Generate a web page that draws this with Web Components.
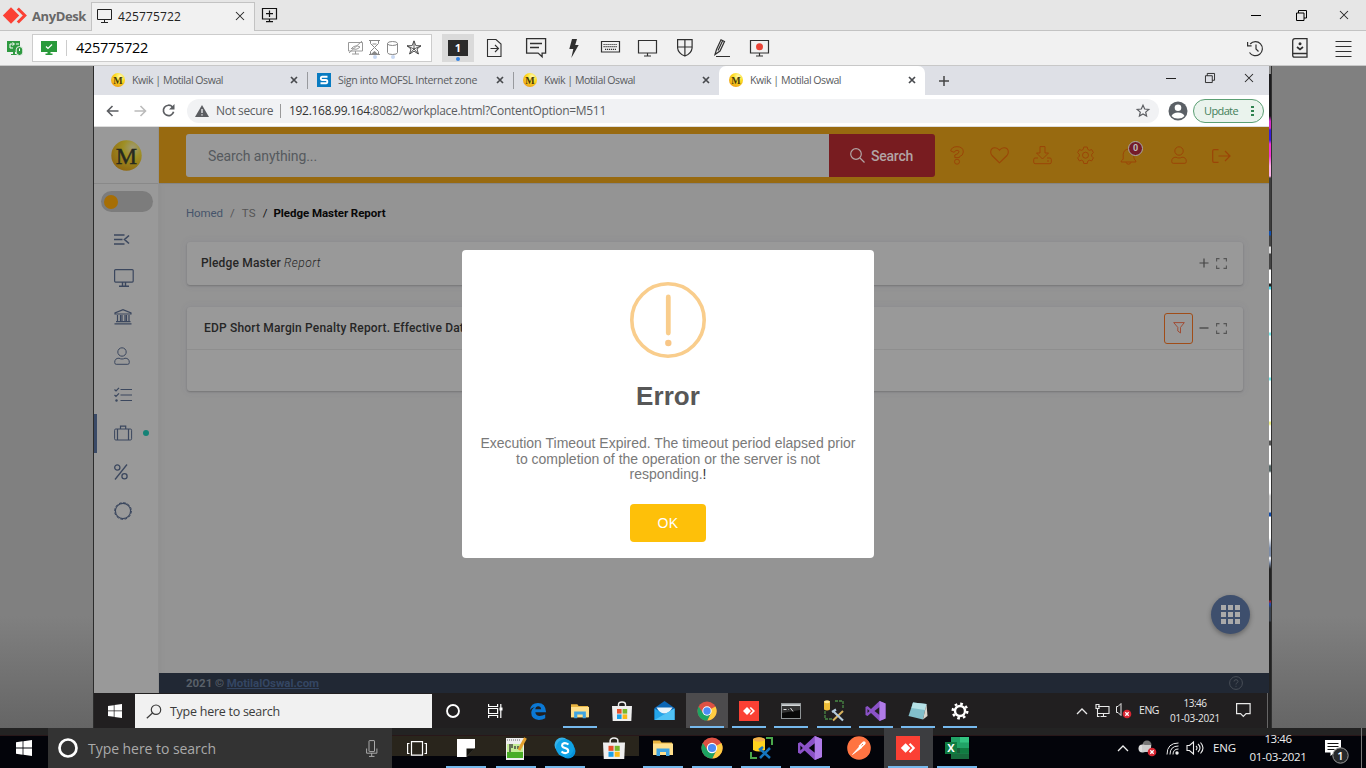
<!DOCTYPE html>
<html lang="en"><head><meta charset="utf-8"><title>AnyDesk</title>
<style>html,body{margin:0;width:1366px;height:768px;overflow:hidden;font-family:"Open Sans","Noto Sans",sans-serif}</style></head>
<body><desk-screen></desk-screen>
<script>
const S='fill="none" stroke="currentColor"';
const chrome='<circle cx="10" cy="10" r="9.6" fill="#dd5144"/><path d="M10 10 18.5 5.4A9.6 9.6 0 0 1 10.2 19.6L14 12z" fill="#ffcd42"/><path d="M1.6 5.4A9.6 9.6 0 0 0 10.2 19.6L14 12 10 14 6 12z" fill="#1da462"/><circle cx="10" cy="10" r="4.7" fill="#fff"/><circle cx="10" cy="10" r="3.7" fill="#4c8bf5"/>';
const folder='<path d="M1 2.5h7l1.5 2H20V17H1z" fill="#e9b440"/><path d="M1 5.5h20V17H1z" fill="#ffe08c"/><path d="M4.5 18v-7.5h13V18h-3.5v-4H8v4z" fill="#3fa4e2"/>';
const vs='<path d="M14 0 20 2.500v15L14 20 5.500 12 2 15 0 14V6l2-1 3.500 3zM14 6 9 10l5 4zM2 8v4l2-2z" fill="#8b52c7" fill-rule="evenodd"/><path d="M14 0 20 2.500v15L14 20z" fill="#b07be8"/>';
const any='<path d="M0 0h20v20H0z" fill="#fb4034"/><path d="M8 6l4 4-4 4-4-4z" fill="#fff"/><path d="M11.300 6.500 14.800 10l-3.500 3.500" fill="none" stroke="#fff" stroke-width="1.700"/>';
const store=(c)=>`<path d="M6.500 6V3.500q0-2.500 3.500-2.500t3.500 2.500V6" fill="none" stroke="${c}" stroke-width="1.400"/><path d="M0 5h20l-.7 15H.7z" fill="${c}"/><path d="M5 8h4.600v4.600H5z" fill="#e74f2a"/><path d="M10.600 8h4.600v4.600h-4.600z" fill="#77b82b"/><path d="M5 13.400h4.600V18H5z" fill="#1a9fe8"/><path d="M10.600 13.400h4.600V18h-4.600z" fill="#fbb918"/>`;
const win='<path d="M0 2.300 6.600 1.300V7.500H0zM7.400 1.200 16 0v7.500H7.400zM0 8.400h6.600v6.300L0 13.700zM7.400 8.400H16V16l-8.600-1.200z" fill="currentColor"/>';
const person=`<circle cx="8" cy="5" r="4.200" ${S}/><path d="M5 11.200q-4.300 0-4.300 4.300 0 1.800 1.500 1.800h11.600q1.500 0 1.500-1.800 0-4.300-4.300-4.300-1.500.8-3 .8t-3-.8z" ${S}/>`;
const fullscreen=`<path d="M.6 3.500V.6h2.900M7.500.6h2.900v2.900M10.400 7.500v2.900H7.500M3.500 10.400H.6V7.500" ${S} stroke-width="1.100"/>`;
const redx='<circle cx="14" cy="12" r="4.300" fill="#d92532"/><path d="M12.300 10.300l3.400 3.400m0-3.400-3.400 3.400" stroke="#fff" stroke-width="1.300"/>';
const I={
anylogo:[24,17,'<path d="M8 .3 16.200 8.500 8 16.700-.2 8.500z" fill="#fb4034"/><path d="M14.800 1.500 21.800 8.500l-7 7" fill="none" stroke="#fb4034" stroke-width="3"/>'],
monitor:[15,14,`<path d="M.5.5h14v10H.5zM7.500 10.500v3M4 13.500h7" ${S}/>`],
bigmon:[20,18,`<path d="M.5 1.500h18v12.500H.5zM9.500 14v3M6 17h7" ${S} stroke-width="1.200"/>`],
x:[10,10,`<path d="M1 1l8 8M9 1 1 9" ${S} stroke-width="1.050"/>`],
tabx:[8,8,`<path d="M1 1l6 6M7 1 1 7" ${S} stroke-width="1.700"/>`],
newtab:[16,15,`<path d="M.5.500h14v10.500H.5zM7.500 2.500v6.500M4 5.700h7M7.500 11v2.500M4 13.700h7" ${S} stroke-width="1.200"/>`],
min:[10,10,`<path d="M0 5.500h10" ${S}/>`],
restore:[11,11,`<path d="M.5 3h7.500v7.500H.5zM2.500 3V.500H10.500V8H8" ${S}/>`],
session:[17,15,'<path d="M0 0h13v11H8v2h2v1H4v-1h2v-2H0z" fill="#2f9a41"/><path d="M6.500 3H3v4h3M5.500 1.500l2 1.500-2 1.500M9 3h3" fill="none" stroke="#fff"/><rect x="9.200" y="5.500" width="6.600" height="9" rx="3.300" fill="#2f9a41" stroke="#f1f1f1"/><path d="M12.500 7.500v2.500" stroke="#fff"/>'],
greenmon:[16,14,'<path d="M0 0h16v11H9.500v1.500h2V14h-7v-1.500h2V11H0z" fill="#299a3b"/><path d="M5 5.500l2 2 4-4" fill="none" stroke="#fff" stroke-width="1.200"/>'],
screenoff:[16,14,`<path d="M.5 1.500h14v8.500H.5zM7.500 10v3M4 13h7M1 12 14 0M3 8q4-5 9-2-4 4-8 1" ${S}/>`],
hour:[11,15,`<path d="M0 .500h11M0 14.500h11M1.500 1v2.500L5.500 7.500l-4 4V14M9.500 1v2.500l-4 4 4 4V14M3.500 4h4" ${S}/><path d="M2 14l3.500-3 3.500 3z" fill="currentColor"/>`],
db:[11,14,`<path d="M.5 2.500v9q0 2 5 2t5-2v-9" ${S}/><ellipse cx="5.500" cy="2.500" rx="5" ry="2" ${S}/>`],
star2:[16,15,`<path d="M8 .8 9.800 5.600l5.200.2L11 9l1.400 5L8 11.200 3.600 14 5 9 1 5.800l5.200-.2zM8 1v8m0 0-4.400 5M8 9l4.400 5M8 9 1 5.800M8 9l7-3.200" ${S} stroke-width=".9"/>`],
star:[14,14,`<path d="M7 1.200 8.700 5l4.100.4-3.100 2.700.9 4L7 10l-3.600 2.100.9-4L1.200 5.400 5.300 5z" ${S} stroke-width="1.200"/>`],
file:[15,18,`<path d="M.5.500h8.500L14 5v12.500H.5zM3.500 9.500h8M8 6l3.500 3.500L8 13" ${S} stroke-width="1.100"/>`],
chat:[21,20,`<path d="M.6.600h19v14.500h-3.500v3.600l-4-3.600H.600zM4 5.500h12M4 9.500h9" ${S} stroke-width="1.300"/>`],
bolt:[10,19,'<path d="M3 0h5L6.200 6h3.500L2.300 19 4.300 10H.3z" fill="currentColor"/>'],
keyboard:[19,12,`<path d="M.5.500h18v10.500H.500z" ${S} stroke-width="1.200"/><path d="M2.500 3.500h14M2.500 5.700h14M4 8.300h11" ${S} stroke-width="1.200" stroke-dasharray="1.200 .8"/>`],
shield:[16,18,`<path d="M.6.600h14.500V9q-.5 5.500-7.200 8-6.800-2.500-7.300-8zM.6 8h14.500M7.900.600V17" ${S} stroke-width="1.200"/>`],
pen:[16,18,`<path d="M1 15.500 2.500 10.500 7 .800l3.500 1.700-4.500 9.500zM8.500 2l-4.500 9.500M2 17.500h14" ${S} stroke-width="1.200"/>`],
record:[20,18,`<path d="M.5 1.500h18v12.500H.5zM9.500 14v3M6 17h7" ${S} stroke-width="1.200"/><circle cx="9.500" cy="7.700" r="3.500" fill="#e94336"/>`],
history:[17,17,`<path d="M3.200 4A7 7 0 1 1 2.500 12.500M.600 2v3.800h4M9 4.500v4.500l2.500 2.500" ${S} stroke-width="1.200"/>`],
book:[16,20,`<path d="M3 .700h12v18.500H2.500q-1.800 0-1.800-2V3q0-2.300 2.300-2.300zM1 15.500h14" ${S} stroke-width="1.300"/><circle cx="8" cy="5.700" r="1.500" fill="currentColor"/><path d="M5 9l3 2.500L11 9" ${S} stroke-width="1.700"/>`],
menu:[17,17,`<path d="M.5 1.500h16M.5 6.500h16M.5 11.500h16M.5 16.500h16" ${S} stroke-width="1.100"/>`],
back:[13,12,`<path d="M12.500 6H1.500M6.500 1l-5 5 5 5" ${S} stroke-width="1.600"/>`],
fwd:[13,12,`<path d="M.5 6h11M6.500 1l5 5-5 5" ${S} stroke-width="1.600"/>`],
reload:[13,13,`<path d="M10.500 3A5.200 5.200 0 1 0 11.600 7.800" ${S} stroke-width="1.700"/><path d="M12.500 0v5.500H7z" fill="currentColor"/>`],
warn:[14,12,'<path d="M7 0l7 12H0z" fill="currentColor"/><path d="M7 4v4M7 9.200v1.300" stroke="#f1f2f4" stroke-width="1.300"/>'],
profile:[20,20,'<circle cx="10" cy="10" r="9.500" fill="#5b6066"/><circle cx="10" cy="6.700" r="3.300" fill="#fff"/><path d="M3.500 15q1.500-3.500 6.500-3.500t6.500 3.500A8 8 0 0 1 10 17.500 8 8 0 0 1 3.500 15z" fill="#fff"/>'],
plus:[10,10,`<path d="M5 0v10M0 5h10" ${S} stroke-width="1.500"/>`],
plus2:[10,10,`<path d="M5 .500v9M.5 5h9" ${S} stroke-width="1.200"/>`],
minus:[10,10,`<path d="M.5 5h9" ${S} stroke-width="1.300"/>`],
full:[11,11,fullscreen],
funnel:[12,12,`<path d="M.7.600h10.600L7.500 5.400v5.600L4.800 9V5.400z" ${S}/>`],
mag:[15,15,`<circle cx="6" cy="6" r="5.300" ${S} stroke-width="1.200"/><path d="M10 10l4.500 4.500" ${S} stroke-width="1.200"/>`],
quest:[14,19,`<path d="M.7 5Q1.500.700 7 .700 13.300.700 13.300 6q0 3.500-4 4.800v.800H4.800V9q4.200-1.200 4.200-3.200Q9 4.300 7 4.300 5 4.300 4.200 6.300zM" ${S}/><circle cx="7" cy="15.700" r="2.500" ${S}/>`],
heart:[19,17,`<path d="M9.500 15.800 2 8.500Q.7 7 .7 5 .7.700 5 .700q2.700 0 4.500 2.600Q11.300.700 14 .700q4.300 0 4.300 4.300 0 2-1.300 3.500z" ${S} stroke-width="1.100"/>`],
down:[19,19,`<path d="M7 .600h5V7h3.500L9.500 13 3.500 7H7zM5 12H2Q.7 12 .7 13.500V16q0 1.700 1.300 1.700h15q1.300 0 1.300-1.700v-2.500Q18.300 12 17 12h-3M14 15h2" ${S}/>`],
gear:[19,19,`<path d="M7.800 1h3.400l.6 2.400 1.500.9 2.400-.7 1.700 3-1.700 1.700v1.900l1.700 1.700-1.700 3-2.400-.7-1.500.9-.6 2.400H7.800l-.6-2.400-1.500-.9-2.400.7-1.700-3 1.700-1.700V8.300L1.600 6.600l1.700-3 2.400.7 1.500-.9z" ${S}/><circle cx="9.500" cy="9.200" r="3" ${S}/>`],
bell:[17,18,`<path d="M8.500 0v2M3.200 12q-.5 1-2 2v1h14.600v-1q-2-2-2-4V7.500Q13.300 2.200 8.500 2.200T3.200 7.500zM6 15.200q.5 2 2.500 2t2.500-2" ${S}/>`],
person:[16,18,person],
logout:[19,14,`<path d="M6.500.700H2Q.7.700.700 2v10q0 1.300 1.300 1.300h4.500M6.500 7h11M13 2l5 5-5 5" ${S} stroke-width="1.200"/>`],
collapse:[16,11,`<path d="M0 1h10.500M0 5.500h8.500M0 10h10.500M15 1.500 10.500 5.500 15 9.500" ${S} stroke-width="1.600"/>`],
smon:[20,18,`<rect x=".600" y=".600" width="18.600" height="12.500" rx="1" ${S} stroke-width="1.200"/><path d="M8.500 13v3.500M11.500 13v3.500M5 17.300h10" ${S} stroke-width="1.400"/>`],
bank:[18,16,`<path d="M1 5V4L9 .700 17 4v1zM3.500 6v6.500M6.500 6v6.500M8 6v6.500M11 6v6.500M12.500 6v6.500M15 6v6.500M2 12.600h14.500M.5 14.800h17" ${S} stroke-width="1.200"/>`],
list:[18,15,`<path d="M6.500 2.500H18M6.500 8H18M6.500 13.500H18M.5 2.500l1.500 1.500L5 .800M.5 8l1.500 1.500L5 6.300" ${S} stroke-width="1.200"/><circle cx="2.500" cy="13.500" r="1.200" fill="currentColor"/>`],
case:[18,16,`<rect x=".600" y="4" width="17" height="11" rx="1.200" ${S}/><path d="M3.500 4v11M14.500 4v11M6.500 4V1.200h5.200V4" ${S} stroke-width="1.200"/>`],
pct:[14,16,`<circle cx="3.300" cy="3.500" r="2.600" ${S} stroke-width="1.300"/><circle cx="10.500" cy="12.300" r="2.600" ${S} stroke-width="1.300"/><path d="M13 .500 1 15.500" ${S} stroke-width="1.300"/>`],
badge:[18,18,`<circle cx="9" cy="9" r="7.600" ${S} stroke-width="1.200"/><circle cx="9" cy="9" r="8.400" ${S} stroke-width="1" stroke-dasharray="2.600 1.800"/>`],
logo:[31,31,'<defs><radialGradient id="g" cx=".7" cy=".25" r=".9"><stop offset="0" stop-color="#9e9a77"/><stop offset=".35" stop-color="#9e8f24"/><stop offset="1" stop-color="#8d610d"/></radialGradient></defs><circle cx="15.500" cy="15.500" r="15.200" fill="url(#g)"/><text x="15.500" y="24" text-anchor="middle" font-family="Liberation Serif" font-size="24" fill="#26291f" stroke="#26291f" stroke-width=".4">M</text>'],
fav:[14,14,'<defs><radialGradient id="g" cx=".65" cy=".25" r=".9"><stop offset="0" stop-color="#fff9b0"/><stop offset=".4" stop-color="#ffdf24"/><stop offset="1" stop-color="#e89012"/></radialGradient></defs><circle cx="7" cy="7" r="7" fill="url(#g)"/><text x="7" y="10.500" text-anchor="middle" font-family="Liberation Serif" font-weight="bold" font-size="10" fill="#473b0b">M</text>'],
sfav:[14,14,'<path d="M0 0h14v14H0z" fill="#087bc1"/><path d="M10.500 3.700H5q-1.200 0-1.200 1.600T5 7h4q1.300 0 1.300 1.700T9 10.300H3.500" fill="none" stroke="#fff" stroke-width="1.900"/>'],
win:[16,16,win],
smag:[16,15,`<circle cx="10" cy="5.700" r="4.700" ${S} stroke-width="1.200"/><path d="M6.500 9 .8 14.300" ${S} stroke-width="1.200"/>`],
ring:[20,20,`<circle cx="10" cy="10" r="8.500" ${S} stroke-width="2.700"/>`],
mic:[12,17,`<rect x="3" y=".600" width="5.500" height="11" rx=".5" ${S}/><path d="M.6 8.500v4.700h10.300V8.500M5.700 13v3M3 16.400h5.500" ${S}/>`],
tasks:[20,15,`<path d="M4.500.600h11v13.500h-11zM2.500 2.500H.600v10h1.900M17.500 2.500h1.900v10h-1.900" ${S} stroke-width="1.200"/>`],
timeline:[15,14,`<path d="M.6 0v2.500h9V0M.600 4.500h9v5h-9zM.600 14v-2.500h9V14M12.800 0v14" ${S} stroke-width="1.200"/><path d="M11.500 3.500h3v3h-3z" fill="currentColor"/>`],
edge:[20,20,'<path d="M1 9Q2 1 10 1q8.500 0 9 10.500H7q.5 4 5 4 3 0 6-1.500v4q-3 2-7 2-8.500-1-8.500-8 0-4 4-6.500Q3 6 1 9zM7 8h6.500Q13 4.800 10.300 4.800 7.500 4.800 7 8z" fill="#0b78d4" fill-rule="evenodd"/>'],
folder:[22,20,folder],
store:[20,20,store('#eee')],
mail:[20,20,'<path d="M0 7 10 0l10 7v12H0z" fill="#0b66b5"/><path d="M2 6.500h16l-4 6H6z" fill="#e8f4fb"/><path d="M0 7.500l10 6 10-6V19H0z" fill="#24a5ea"/><path d="M0 19 12 12l8-4.500V19z" fill="#50c2f5"/>'],
chrome:[20,20,chrome],any:[20,20,any],vs:[20,20,vs],
cmd:[20,16,'<path d="M0 0h20v16H0z" fill="#8f9496"/><path d="M.8 1.500h18.400V3H.8z" fill="#d5d9da"/><path d="M1 3h18v12H1z" fill="#080808"/><path d="M1 3h18v4L1 10z" fill="#333"/><path d="M2.500 6.500h3m1.500 0h.500m2-1.500L12 8.500" stroke="#ddd" fill="none"/>'],
sql:[20,21,'<path d="M11 1h8v8M1 11v8h7" fill="none" stroke="#4a8a45" stroke-width="1.300" stroke-dasharray="3 1"/><path d="M0 1.500q3-2 6 0v8q-3 2-6 0z" fill="#eebd37"/><ellipse cx="3" cy="1.800" rx="3" ry="1.400" fill="#ffea9b"/><path d="M9 20.500 19 11" stroke="#d8b35f" stroke-width="2"/><path d="M9 11l10 9.500M8 12l4-2.500" stroke="#b4cadb" stroke-width="2.200"/>'],
sql2:[23,22,'<path d="M16 1h6v7M1 15v6h6" fill="none" stroke="#4aa84b" stroke-width="2"/><path d="M3 2q6-3 12 0v11q-6 3-12 0z" fill="#ffd21f"/><ellipse cx="9" cy="2.500" rx="6" ry="2.200" fill="#f2b04a"/><path d="M10 21 20 11M10 12l10 9M9 13l4-3" stroke="#1575bf" stroke-width="2.500"/>'],
note:[20,18,'<path d="M5 .500 18.500 2 15 17.500.5 14z" fill="#82bfcb"/><path d="M5 .500 18.500 2 17 8 3.500 6z" fill="#b5e1e6"/><path d="M18.500 2 19.500 14 15 17.500z" fill="#d8d5cc"/>'],
wgear:[18,18,'<circle cx="9" cy="9" r="5" fill="none" stroke="#fff" stroke-width="2.400"/><circle cx="9" cy="9" r="7.300" fill="none" stroke="#fff" stroke-width="2.400" stroke-dasharray="2.700 3.030"/>'],
sticky:[18,18,'<path d="M0 0h18v9L9.500 18H0z" fill="#fff"/><path d="M9.500 18V9.500H18z" fill="#15140f"/>'],
npp:[22,23,'<path d="M1 1h18v22H1z" fill="#eee"/><path d="M2 12h16v9H2z" fill="#49ad26"/><path d="M2 7h16v8H2z" fill="#c4ed96"/><path d="M5 7v8M7 7v4M10 9v3M13 9v3" stroke="#333" stroke-width="1.300"/><path d="M2 3h14" stroke="#666" stroke-dasharray="1 1"/><path d="M14 13 20.500 1" stroke="#e3a02d" stroke-width="3"/>'],
skype:[22,22,'<circle cx="8" cy="8" r="7.500" fill="#36b1e7"/><circle cx="14" cy="14" r="7.500" fill="#0793dc"/><circle cx="11" cy="11" r="9" fill="#10a3e5"/><path d="M14.500 7.500Q11 5 8.500 7q-1.500 3 2.500 4t3 4q-3 2.500-6.500-.5" fill="none" stroke="#fff" stroke-width="2.100"/>'],
postman:[24,24,'<circle cx="12" cy="12" r="11.800" fill="#ff7442"/><path d="M5.500 18.500 13 10l1.700 1.700z" fill="#fff" stroke="#fff" stroke-width=".7"/><path d="M13.500 10.500 17 7" stroke="#fff" stroke-width="3.400" stroke-linecap="round"/><path d="M14.500 9.500l1.500-1.500" stroke="#ff7442"/>'],
excel:[24,22,'<path d="M6 0h18v22H6z" fill="#21a366"/><path d="M15 0h9v5.500h-9z" fill="#33c481"/><path d="M6 11h9v5.500H6z" fill="#185c37"/><path d="M15 11h9v5.500h-9z" fill="#107c41"/><path d="M6 16.500h18V22H6z" fill="#176b3c"/><path d="M0 5h12v12H0z" fill="#107c41"/><text x="6" y="15" text-anchor="middle" font-family="Open Sans" font-weight="bold" font-size="11" fill="#fff">X</text>'],
caret:[12,8,`<path d="M1 7l5-5 5 5" ${S} stroke-width="1.300"/>`],
net:[15,13,`<path d="M3 2.500h11v7H3M8.500 9.500v3M5.500 12.500h6M1 .500v4h3v-4zM2.500 4.500v8h2" ${S} stroke-width="1.100"/>`],
mute:[19,17,`<path d="M5 4.500H3.500v6H5l3 3V1.500z" ${S}/>${redx}`],
cloud:[19,17,`<circle cx="9" cy="5" r="4.500" fill="#777"/><circle cx="4.500" cy="8.500" r="4" fill="#ddd"/><path d="M4 5h9v7H4z" fill="#ccc"/>${redx}`],
wifi:[13,13,`<circle cx="11" cy="11" r="1.700" fill="currentColor"/><path d="M7 12.500Q7 7 12.500 7M4 12.500Q4 4 12.500 4M1 12.500Q1 1 12.500 1" ${S}/>`],
vol:[18,14,`<path d="M3.500 4.500H1v5h2.500l4 3.500V1zM10 5q2 2 0 4M12 3q4 4 0 8M14.500 1.500q5 5.500 0 11" ${S} stroke-width="1.100"/>`],
notif:[15,15,`<path d="M.6.600h13.500v10h-4L7.300 13.500 4.600 10.600h-4z" ${S} stroke-width="1.200"/>`],
notif2:[25,25,'<path d="M0 0h16v12.500H9.500L5.500 16v-3.500H0z" fill="#fff"/><path d="M2.500 3.500h11M2.500 6.500h11M2.500 9.500h7" stroke="#111"/><circle cx="15.500" cy="15.500" r="7.700" fill="#27292b" stroke="#999"/><text x="15.500" y="19.500" text-anchor="middle" font-family="Open Sans" font-size="11" font-weight="600" fill="#fff">1</text>'],
help:[14,14,`<circle cx="7" cy="7" r="6.400" ${S}/><path d="M5 5.500Q5 3.700 7 3.700t2 1.700q0 1-1.200 1.600T7 8.500M7 9.800v1" ${S}/>`],
grid:[19,19,'<path d="M0 0h5v5H0zM7 0h5v5H7zM14 0h5v5h-5zM0 7h5v5H0zM7 7h5v5H7zM14 7h5v5h-5zM0 14h5v5H0zM7 14h5v5H7zM14 14h5v5h-5z" fill="currentColor"/>'],
alert:[76,76,'<circle cx="38" cy="38" r="36.200" fill="none" stroke="#f9cd8c" stroke-width="3.600"/><path d="M38.300 15v36" stroke="#f9cd8c" stroke-width="4.800" stroke-linecap="round"/><circle cx="38.300" cy="61" r="3.200" fill="#f8c686"/>']
};
I.quest[2]=I.quest[2].replace('zM"','z"');
const def=(name,css,html)=>customElements.define(name,class extends HTMLElement{constructor(){super();this.attachShadow({mode:'open'}).innerHTML=`<style>*{box-sizing:border-box}${css}</style>`+(typeof html==='function'?html(this):html)}});
const ic=(n,st='',w='',h='')=>`<ui-icon name="${n}" style="${st}"${w?` w="${w}" h="${h}"`:''}></ui-icon>`;
const cell=(w,n,st='',iw='',ih='')=>`<span class="cell" style="width:${w}px;${st}">${ic(n,'',iw,ih)}</span>`;
const cc='.cell{display:flex;flex:none;align-items:center;justify-content:center}';

def('desk-screen',':host{display:grid;grid-template-rows:31px 35px 662px 40px;width:1366px;height:768px}','<title-bar></title-bar><tool-bar></tool-bar><remote-stage></remote-stage><host-taskbar></host-taskbar>');

def('title-bar',`:host{display:flex;background:#e6e6e6;border-bottom:1px solid #c3c3c3;color:#222;box-sizing:border-box}${cc}
.brand{width:91px;display:flex;align-items:center;padding-left:3px;font-weight:700;font-size:13px;color:#686868;gap:5px}
.tab{width:164px;height:29px;margin-top:2px;margin-bottom:-1px;background:#f1f1f1;border:1px solid #c3c3c3;border-bottom:0;display:flex;align-items:center;padding:0 9px 2px 5px;font-size:12px;gap:6px}.g{flex:1}`,
`<div class="brand">${ic('anylogo')}<fit-text w="54" style="padding-top:1px">AnyDesk</fit-text></div><div class="tab">${ic('monitor')}<fit-text w="63">425775722</fit-text><span class="g"></span>${ic('x')}</div>${cell(30,'newtab','color:#111;padding-top:1px')}<span class="g"></span>${cell(44,'min','color:#000')}${cell(46,'restore','color:#000')}${cell(42,'x','padding-right:2px')}`);

def('tool-bar',`:host{display:flex;align-items:center;background:#f1f1f1;border-bottom:1px solid #c8c8c8;color:#303030;box-sizing:border-box}${cc}.cell{padding-right:1px}
.addr{width:400px;height:28px;background:#fff;border:1px solid #ccc;display:flex;align-items:center;padding:0 9px 1px 8px;font-size:14.500px;color:#000}.sep{width:1px;height:16px;background:#ccc;margin:0 9px}
.one{position:relative;width:32px;height:28px;background:#dadada;margin-left:10px;display:flex;align-items:center;justify-content:center}.one b{width:20px;height:16px;background:#2b2b2b;color:#fff;font:700 11px/16px "Open Sans";text-align:center}.dot{width:4px;height:4px;border-radius:2px;background:#3584e4;position:absolute;bottom:1px}.g{flex:1}
.st{display:flex;position:relative;justify-content:center}.st i{position:absolute;bottom:-4px;width:4px;height:4px;border-radius:2px;background:#c9d9f2}`,
`${cell(32,'session')}<div class="addr">${ic('greenmon')}<span class="sep"></span><fit-text w="72">425775722</fit-text><span class="g"></span>${ic('screenoff','color:#999;margin-right:5px')}<span class="st" style="margin-right:7px;color:#888">${ic('hour')}<i></i></span><span class="st" style="margin-right:8px;color:#888">${ic('db')}<i></i></span>${ic('star2','color:#444')}</div><div class="one"><b>1</b><span class="dot"></span></div>${cell(42,'file')}${cell(42,'chat')}${cell(32,'bolt')}${cell(41,'keyboard','padding-bottom:3px')}${cell(34,'bigmon')}${cell(40,'shield')}${cell(34,'pen')}${cell(42,'record')}<span class="g"></span>${cell(44,'history')}${cell(44,'book')}${cell(44,'menu')}`);

def('remote-stage',`:host{display:flex;background:linear-gradient(#808080 0 550px,#656565);padding-left:93px;box-sizing:border-box}
.screen{width:1176px;height:662px;border-left:1px solid #2c2c2c;display:grid;grid-template-rows:29px 32px 566px 35px;background:#fff}
.edge{width:2px;background:linear-gradient(#8a8a8a 0 8px,#1c1c1e 8px 50px,#d32dc8 55px 62px,#3a1ed8 64px 74px,#f336d0 78px 90px,#ffb0e8 100px 110px,#3d3d3d 112px 165px,#0f4fb0 165px 169px,#444 170px 180px,#ddd 181px 187px,#444 188px 203px,#fff 204px 217px,#222 218px 220px,#45d6e8 221px 223px,#fff 224px 266px,#7ee 267px 269px,#fff 270px 311px,#7ee 312px 314px,#fff 315px 355px,#eef080 356px 358px,#fff 360px 374px,#555 375px 379px,#fff 380px 398px,#566 400px 405px,#fff 407px 427px,#ccc 430px 446px,#124dab 447px 450px,#fff 451px 472px,#7c8ca8 482px 490px,#fff 492px,#7c8ca8 497px,#222 503px 534px,#b31d1d 535px,#174abd 538px,#3b424c 542px 555px,#222 556px)}
.dark{width:1px;background:#303030}`,
'<div class="screen"><chrome-tabs></chrome-tabs><chrome-address></chrome-address><kwik-page></kwik-page><remote-taskbar></remote-taskbar></div><div class="edge"></div><div class="dark"></div>');

def('chrome-tabs',`:host{display:flex;background:#dee0e6;padding-left:7px;color:#222;box-sizing:border-box}${cc}.g{flex:1}`,
`<browser-tab icon="fav" line><fit-text w="91">Kwik | Motilal Oswal</fit-text></browser-tab><browser-tab icon="sfav" line><fit-text w="139">Sign into MOFSL Internet zone</fit-text></browser-tab><browser-tab icon="fav"><fit-text w="91">Kwik | Motilal Oswal</fit-text></browser-tab><browser-tab icon="fav" active><fit-text w="91">Kwik | Motilal Oswal</fit-text></browser-tab>${cell(38,'plus','color:#454545')}<span class="g"></span>${cell(40,'min','padding-bottom:5px')}${cell(38,'restore','padding-bottom:5px',10,10)}${cell(40,'x','padding-bottom:5px')}`);

def('browser-tab',`:host{display:flex;align-items:center;width:206px;height:29px;padding:0 9px 1px 10px;gap:7px;box-sizing:border-box;font-size:10.600px;color:#5a5c60;position:relative}:host([line])::after{content:"";position:absolute;right:-1px;top:6px;width:1px;height:17px;background:#989a9e}:host([active]){background:#fff;border-radius:7px 7px 0 0}.g{flex:1}`,
e=>`${ic(e.getAttribute('icon'))}<slot></slot><span class="g"></span>${ic('tabx','color:#484a4e')}`);

def('chrome-address',`:host{display:flex;align-items:center;background:#fff;color:#5b5d61;padding-left:5px;border-bottom:1px solid #ddd;box-sizing:border-box}${cc}
.pill{width:972px;height:24px;border-radius:12px;background:#f1f2f4;margin-left:5px;display:flex;align-items:center;padding:0 9px 0 8px;font-size:12px}.g{flex:1}.sep{width:1px;height:14px;background:#999;margin:0 8px 0 7px}
.upd{width:71px;height:24px;border:1px solid #5b9f74;border-radius:12px;background:#eaf3ed;display:flex;align-items:center;padding:0 9px 0 10px;font-size:11px;color:#43805a;margin-left:5px}.d{width:3px;height:12px;background:radial-gradient(circle,#2f8250 1.300px,transparent 1.500px) 0 0/3px 4px}`,
`${cell(27,'back')}${cell(28,'fwd','color:#bbb')}${cell(28,'reload')}<div class="pill">${ic('warn')}<fit-text w="57" style="margin-left:7px">Not secure</fit-text><span class="sep"></span><fit-text w="317"><span style="color:#333">192.168.99.164</span>:8082/workplace.html?ContentOption=M511</fit-text><span class="g"></span>${ic('star')}</div>${ic('profile','margin-left:9px')}<div class="upd"><fit-text w="34">Update</fit-text><span class="g"></span><span class="d"></span></div>`);

def('kwik-page',`:host{display:grid;grid-template-columns:65px 1fr;position:relative;font-family:Roboto,sans-serif;background:#949494;overflow:hidden}
main{display:grid;grid-template-rows:56px 490px 20px;min-width:0}.body{padding:22px 26px 0 27px;box-shadow:inset 4px 2px 4px -3px #8885}
.crumb{display:flex;height:15px;align-items:center;font-size:11.500px;color:#555;margin-bottom:22px}
footer{background:#212834;display:flex;align-items:center;padding:0 26px 0 27px;font-size:11.500px;font-weight:700;color:#596069}footer u{color:#344663}.g{flex:1}
error-dialog{position:absolute;left:368px;top:123px}.fab{position:absolute;left:1117px;top:468px;width:39px;height:39px;border-radius:50%;background:#3e4f6d;color:#aaa;display:flex;align-items:center;justify-content:center;box-shadow:0 2px 5px #0005}`,
`<kwik-sidebar></kwik-sidebar><main><kwik-header></kwik-header><div class="body"><div class="crumb"><fit-text w="37" style="color:#46546b">Homed</fit-text><span style="margin:0 7px">/</span><fit-text w="14">TS</fit-text><span style="margin:0 6px 0 7px;color:#111">/</span><fit-text w="112" style="font-weight:700;color:#080808">Pledge Master Report</fit-text></div>
<kwik-panel toggle="plus2"><fit-text w="80" style="margin-right:3px">Pledge Master</fit-text><fit-text w="37" style="font-style:italic;font-weight:300">Report</fit-text></kwik-panel>
<kwik-panel toggle="minus" filter><fit-text w="260" style="margin-left:3px">EDP Short Margin Penalty Report. Effective Dat</fit-text></kwik-panel></div>
<footer><fit-text w="133">2021 © <u>MotilalOswal.com</u></fit-text><span class="g"></span>${ic('help','color:#484e57')}</footer></main><div class="fab">${ic('grid')}</div><error-dialog></error-dialog>`);

def('kwik-sidebar',`:host{display:block;background:#999;border-right:1px solid #929292;color:#3b475e;box-sizing:border-box}
.logo{height:57px;border-bottom:1px solid #898989;padding:13px 0 0 17px;box-sizing:border-box}.toggle{width:52px;height:21px;border-radius:11px;background:#7c7c7c;margin:7px 0 8px 7px;padding:3.500px 3px}.toggle i{display:block;width:14px;height:14px;border-radius:50%;background:#a66e05}
.it{height:38.800px;display:flex;align-items:center;padding-left:20px}.act{padding-left:17px;border-left:3px solid #3a4a67}.act i{width:6px;height:6px;border-radius:50%;background:#158276;margin-left:13px}.act ui-icon{margin-right:-2px}`,
`<div class="logo">${ic('logo')}</div><div class="toggle"><i></i></div>`+['collapse','smon','bank','person','list','case','pct','badge'].map(n=>`<div class="it ${n=='case'?'act':''}">${ic(n)}${n=='case'?'<i></i>':''}</div>`).join(''));

def('kwik-header',`:host{display:flex;align-items:center;background:#986a10;border-bottom:1px solid #858585;padding-left:27px;color:#9b4507;box-sizing:border-box;padding-top:1px;height:57px}${cc}
.in{width:643px;height:43px;background:#999;border-radius:3px 0 0 3px;display:flex;align-items:center;padding-left:22px;font-size:14px;color:#565a5e}
.btn{width:106px;height:43px;background:#781c20;border-radius:0 3px 3px 0;display:flex;align-items:center;padding-left:21px;gap:6px;color:#b2a5a5;font-size:14px;font-weight:500}.bell{position:relative;display:flex}.bell b{position:absolute;left:21px;top:-6px;width:15px;height:15px;border-radius:50%;background:#751c2a;border:1px solid #aaa;color:#bbb;font:700 9px/13px Roboto;text-align:center}`,
`<div class="in"><fit-text w="109">Search anything...</fit-text></div><div class="btn">${ic('mag')}<fit-text w="42">Search</fit-text></div>${cell(43,'quest')}${cell(43,'heart')}${cell(43,'down')}${cell(43,'gear')}<span class="bell">${cell(43,'bell')}<b>0</b></span>${cell(57,'person','padding-bottom:2px')}${cell(29,'logout')}`);

def('kwik-panel',`:host{display:block;background:#999;border-radius:3px;box-shadow:0 1px 2px #0003,0 0 8px #55558818;font-size:12px;font-weight:500;color:#262626;margin:0 0 22px 1px;width:1056px;height:43px;box-sizing:border-box}:host([filter]){height:84px}
header{height:42px;padding:0 16px 0 14px;display:flex;align-items:center}:host([filter]) header{border-bottom:1px solid #8e8e8e;height:43px}.g{flex:1}.f{width:29px;height:31px;border:1px solid #a04d18;border-radius:3px;display:flex;align-items:center;justify-content:center;margin-right:6px;color:#a04d35}`,
e=>`<header><slot></slot><span class="g"></span>${e.hasAttribute('filter')?`<span class="f">${ic('funnel')}</span>`:''}${ic(e.getAttribute('toggle'),'color:#444;margin-right:7px')}${ic('full','color:#555')}</header>`);

def('error-dialog',`:host{display:flex;flex-direction:column;align-items:center;width:412px;height:308px;background:#fff;border-radius:4px;padding-top:32px;box-sizing:border-box;font-family:"Liberation Sans",sans-serif;color:#797979}
h2{margin:21px 0 0;font-size:26px;line-height:34px;color:#575757}.m{display:flex;flex-direction:column;align-items:center;font-size:14px;line-height:15.600px;margin:23px 0 21px}.ok{width:76px;height:38px;border-radius:4px;background:#fec009;color:#fff;font-size:14px;display:flex;align-items:center;justify-content:center}`,
`${ic('alert')}<h2><fit-text w="64">Error</fit-text></h2><div class="m"><fit-text w="375">Execution Timeout Expired. The timeout period elapsed prior</fit-text><fit-text w="304">to completion of the operation or the server is not</fit-text><fit-text w="77">responding.<span style="color:#333">!</span></fit-text></div><div class="ok"><fit-text w="21">OK</fit-text></div>`);

const app=(n,o={})=>`<task-app icon="${n}" ${o.w?`w="${o.w}" h="${o.h}"`:''} ${o.run===0?'':'run'} ${o.on?'on':''}></task-app>`;
def('task-app',`:host{display:flex;flex:none;width:var(--cw);height:100%;align-items:center;justify-content:center;position:relative;color:#fff;box-sizing:border-box}:host([run])::after{content:"";position:absolute;left:calc(50% - var(--uw)/2);width:var(--uw);bottom:0;height:2px;background:#76b9ed}:host([on]){background:var(--onbg)}`,
e=>ic(e.getAttribute('icon'),'',e.getAttribute('w')||'',e.getAttribute('h')||''));

def('remote-taskbar',`:host{display:flex;background:#211f20;--cw:42.270px;--uw:34px;--onbg:#4c4b4d;color:#e8e8e8;min-width:0;box-sizing:border-box}${cc}
.s{width:297px;height:34px;margin-top:1px;background:#f1f1f1;display:flex;align-items:center;padding-left:11px;gap:8px;color:#3b3b3b;font-size:12.500px}.g{flex:1}.t{display:flex;flex-direction:column;align-items:center;justify-content:center;font-size:10px;line-height:15px;width:52px;margin:0 5px 0 10px}.lang{display:flex;align-items:center;font-size:10.500px;margin-left:7px;padding-bottom:1px}.end{width:1px;background:#666;margin:0 1px 0 7px}`,
`${cell(41,'win','color:#fff',14,14)}<div class="s">${ic('smag')}<fit-text w="110">Type here to search</fit-text></div>${app('ring',{w:14,h:14,run:0})}${app('timeline',{run:0})}${app('edge',{run:0,w:18,h:18})}${app('folder',{w:20,h:18})}${app('store',{run:0})}${app('mail',{run:0,w:21,h:20})}${app('chrome',{on:1})}${app('any')}${app('cmd')}${app('sql')}${app('vs',{w:21,h:20})}${app('note')}${app('wgear')}<span class="g"></span>${cell(21,'caret')}${cell(21,'net')}${cell(19,'mute')}<span class="lang"><fit-text w="20">ENG</fit-text></span><span class="t"><fit-text w="23">13:46</fit-text><fit-text w="50">01-03-2021</fit-text></span>${cell(34,'notif')}<span class="end"></span>`);

def('host-taskbar',`:host{display:flex;background:linear-gradient(#232323 0 7px,#281719 7px 8px,#03040a 8px);--cw:49.100px;--uw:40px;--onbg:#3c3d40;color:#eee;box-sizing:border-box}${cc}
.s{width:344px;background:#333;display:flex;align-items:center;padding:0 14px 0 10px;color:#aaa;font-size:14px}.apps{display:flex;padding-left:.8px;background:linear-gradient(#29251c,#29251c) 0 8px/247px 20px no-repeat}.g{flex:1}.t{display:flex;flex-direction:column;align-items:center;justify-content:center;font-size:11.500px;line-height:18px;width:60px;margin:0 17px 0 12px;padding-bottom:1px}.lang{display:flex;align-items:center;font-size:11.500px;margin-left:8px;padding-bottom:1px}.end{width:1px;background:#777;margin:0 4px 0 11px}`,
`${cell(48,'win','color:#fff',16,16)}<div class="s">${ic('ring','color:#fff;margin-right:10px',20,20)}<fit-text w="128">Type here to search</fit-text><span class="g"></span>${ic('mic')}</div><div class="apps">${app('tasks',{run:0})}${app('sticky')}${app('npp')}${app('skype')}${app('store',{run:0,w:22,h:22})}${app('folder')}${app('chrome',{w:22,h:22})}${app('sql2')}${app('vs',{w:24,h:24})}${app('postman',{run:0})}${app('any',{on:1,w:24,h:24})}${app('excel')}</div><span class="g"></span>${cell(24,'caret')}${cell(24,'cloud')}${cell(26,'wifi')}${cell(20,'vol')}<span class="lang"><fit-text w="23">ENG</fit-text></span><span class="t"><fit-text w="27">13:46</fit-text><fit-text w="57">01-03-2021</fit-text></span><span style="display:flex;padding-top:12px">${ic('notif2')}</span><span class="end"></span>`);

customElements.define('ui-icon',class extends HTMLElement{constructor(){super();const [w,h,p]=I[this.getAttribute('name')],W=this.getAttribute('w')||w,H=this.getAttribute('h')||h;
this.attachShadow({mode:'open'}).innerHTML=`<style>:host{display:block;flex:none;width:${W}px;height:${H}px}svg{display:block;overflow:visible}</style><svg width="${W}" height="${H}" viewBox="0 0 ${w} ${h}">${p}</svg>`}});
// Single-line label whose tracking is adjusted so the line occupies its declared width.
customElements.define('fit-text',class extends HTMLElement{constructor(){super();this.attachShadow({mode:'open'}).innerHTML='<style>:host{display:block;flex:none;white-space:nowrap}span{display:inline-block}</style><span><slot></slot></span>'}
connectedCallback(){const w=+this.getAttribute('w'),s=this.shadowRoot.querySelector('span'),n=this.textContent.length;this.style.width=w+'px';s.style.letterSpacing=(w-s.getBoundingClientRect().width)/n+'px'}});
</script></body></html>
